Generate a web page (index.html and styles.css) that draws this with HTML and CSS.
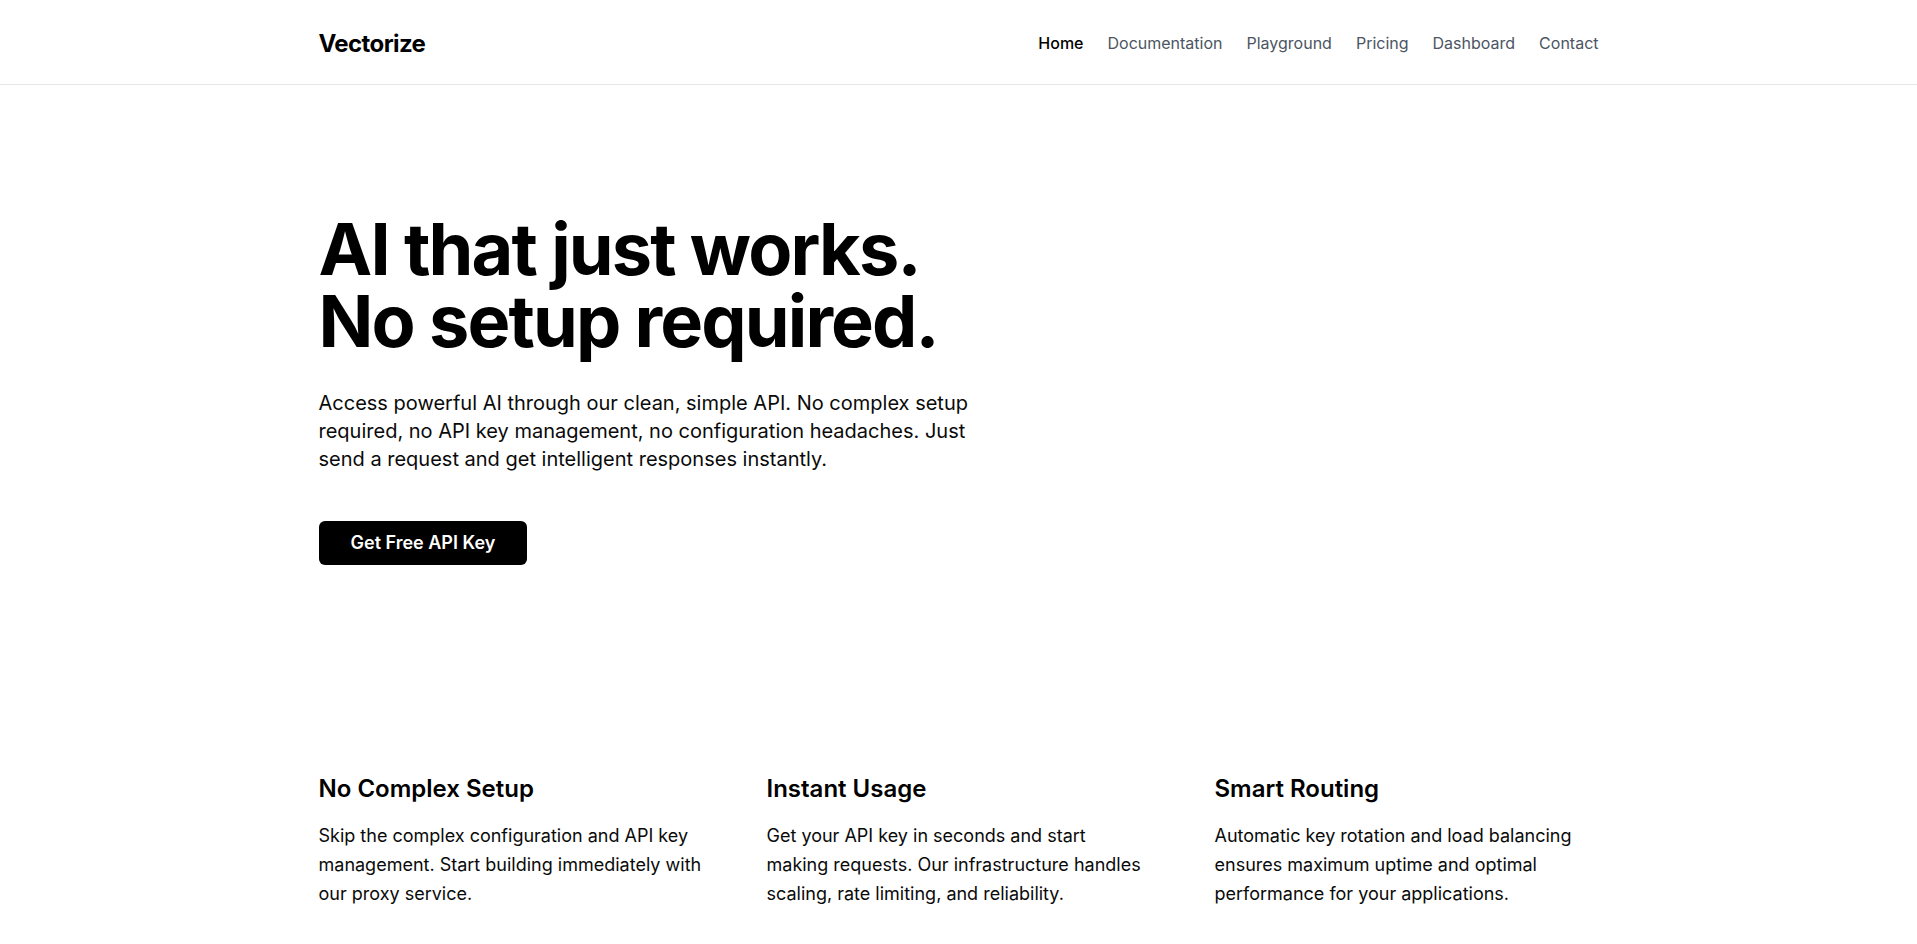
FILE: index.html
```html
<!DOCTYPE html>
<html lang="en">
  <head>
    <meta charset="UTF-8" />
    <meta name="viewport" content="width=device-width, initial-scale=1.0" />
    <title>Vectorize - AI that just works</title>
    <link rel="stylesheet" href="styles.css">
  </head>
  <body>
    <header class="site-header">
      <div class="container header-inner">
        <a href="#" class="logo">Vectorize</a>
        <nav class="nav">
          <a href="#" class="nav-link active">Home</a>
          <a href="#" class="nav-link">Documentation</a>
          <a href="#" class="nav-link">Playground</a>
          <a href="#" class="nav-link">Pricing</a>
          <a href="#" class="nav-link">Dashboard</a>
          <a href="#" class="nav-link">Contact</a>
        </nav>
      </div>
    </header>

    <main>
      <section class="hero">
        <div class="container">
          <h1 class="hero-title">AI that just works.<br />No setup required.</h1>
          <p class="hero-text">
            Access powerful AI through our clean, simple API. No complex setup
            required, no API key management, no configuration headaches. Just
            send a request and get intelligent responses instantly.
          </p>
          <a href="#" class="btn-primary">Get Free API Key</a>
        </div>
      </section>

      <section class="features">
        <div class="container features-grid">
          <div class="feature">
            <h3>No Complex Setup</h3>
            <p>Skip the complex configuration and API key management. Start building immediately with our proxy service.</p>
          </div>
          <div class="feature">
            <h3>Instant Usage</h3>
            <p>Get your API key in seconds and start making requests. Our infrastructure handles scaling, rate limiting, and reliability.</p>
          </div>
          <div class="feature">
            <h3>Smart Routing</h3>
            <p>Automatic key rotation and load balancing ensures maximum uptime and optimal performance for your applications.</p>
          </div>
        </div>
      </section>

      <section class="example">
        <div class="container">
          <h2>One request. That's it.</h2>
          <pre class="code-block">curl https://api.vectorize.dev/v1/chat \
  -H "Authorization: Bearer $VECTORIZE_KEY" \
  -d '{"message": "Hello!"}'</pre>
        </div>
      </section>
    </main>

    <footer class="site-footer">
      <div class="container footer-inner">
        <span>&copy; 2024 Vectorize</span>
        <span>Built for developers</span>
      </div>
    </footer>
  </body>
</html>
```

FILE: styles.css
```css
::-webkit-scrollbar {
  width: 3px;
}

::-webkit-scrollbar-track {
  background-color: #f1f1f1;
}

::-webkit-scrollbar-thumb {
  background-color: #888;
}

* {
  box-sizing: border-box;
}

body {
  margin: 0;
  background-color: #fff;
  color: #111;
  font-family: Inter, "Noto Sans", Arial, sans-serif;
}

a {
  text-decoration: none;
  color: inherit;
}

.container {
  max-width: 1280px;
  margin: 0 auto;
}

/* Header */
.site-header {
  border-bottom: 1px solid #e5e7eb;
}

.header-inner {
  display: flex;
  align-items: center;
  justify-content: space-between;
  height: 84px;
}

.logo {
  padding-top: 3px;
  font-size: 24px;
  font-weight: 700;
  letter-spacing: -0.025em;
  color: #000;
}

.nav {
  display: flex;
  gap: 24px;
  padding-top: 1px;
}

.nav-link {
  font-size: 16px;
  color: #4b5563;
}

.nav-link.active {
  color: #000;
  font-weight: 500;
}

/* Hero */
.hero {
  padding: 128px 0 128px;
}

.hero-title {
  margin: 0;
  font-size: 72px;
  line-height: 1;
  font-weight: 700;
  letter-spacing: -0.026em;
  color: #000;
}

.hero-text {
  max-width: 672px;
  margin: 32px 0 48px;
  font-size: 20px;
  line-height: 28px;
  color: #0a0a0a;
}

.btn-primary {
  display: inline-block;
  padding: 8px 32px;
  background-color: #000;
  color: #fff;
  font-size: 18px;
  line-height: 28px;
  font-weight: 600;
  border-radius: 6px;
}

/* Features */
.features {
  padding: 80px 0 96px;
}

.features-grid {
  display: grid;
  grid-template-columns: repeat(3, 1fr);
  gap: 64px;
}

.feature h3 {
  margin: 0 0 17px;
  font-size: 24px;
  line-height: 32px;
  font-weight: 600;
  color: #000;
}

.feature p {
  margin: 0;
  font-size: 18px;
  line-height: 1.6;
  color: #0a0a0a;
}

/* Example request */
.example {
  padding: 96px 0 160px;
}

.example h2 {
  margin: 0 0 32px;
  font-size: 36px;
  font-weight: 700;
  letter-spacing: -0.02em;
}

.code-block {
  margin: 0;
  padding: 32px;
  background-color: #0a0a0a;
  color: #e5e7eb;
  border-radius: 8px;
  font-family: "Liberation Mono", monospace;
  font-size: 16px;
  line-height: 1.7;
}

/* Footer */
.site-footer {
  border-top: 1px solid #e5e7eb;
  padding: 48px 0 64px;
}

.footer-inner {
  display: flex;
  justify-content: space-between;
  font-size: 14px;
  color: #6b7280;
}
```
